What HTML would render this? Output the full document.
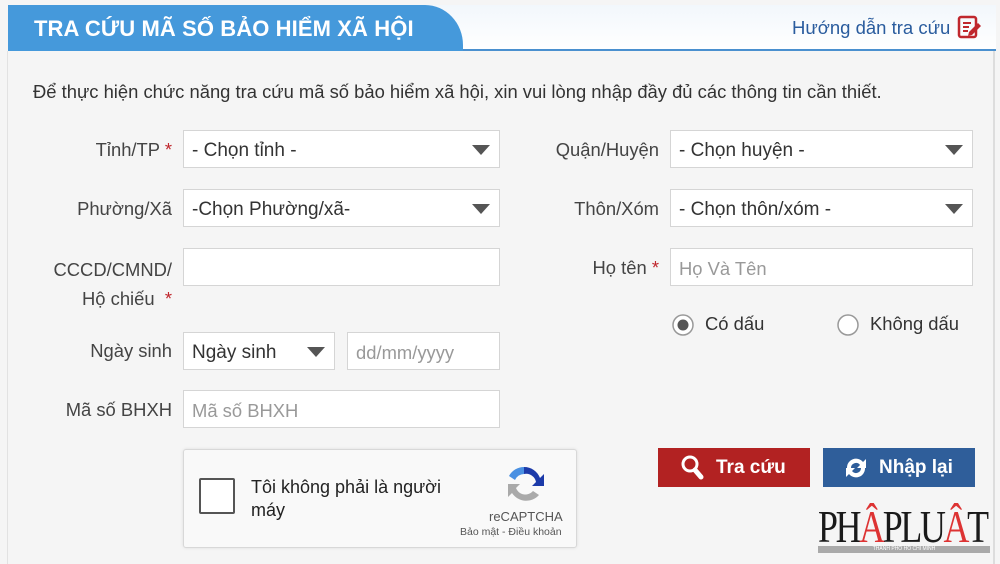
<!DOCTYPE html>
<html><head><meta charset="utf-8"><style>
*{box-sizing:border-box;margin:0;padding:0}
body{width:1000px;height:564px;background:#f5f5f5;font-family:"Liberation Sans","DejaVu Sans",sans-serif;color:#333;position:relative;overflow:hidden;font-size:18.4px}
.abs{position:absolute}
.hdr{left:8px;top:5px;width:988px;height:46px;background:linear-gradient(#f2f7fc,#fff);border-bottom:2px solid #4a90cf}
.tab{left:8px;top:5px;width:455px;height:46px;background:#4599db;border-top-right-radius:38px 40px;color:#fff;font-weight:bold;font-size:22px;padding:11px 0 0 26px;letter-spacing:0.1px}
.rb{left:993px;top:51px;width:2px;height:513px;background:#ddd}
.lb{left:7px;top:51px;width:1px;height:513px;background:#e2e2e2}
.lbl{text-align:right;color:#444}
.f{background:#fff;border:1.5px solid #d5d5d5;height:38px;padding:0 8px;line-height:40px;color:#333}
.ph{color:#999}
.arr{position:absolute;right:9px;top:14px;width:0;height:0;border-left:9px solid transparent;border-right:9px solid transparent;border-top:10px solid #555}
.req{color:#c0272d}
.btn{height:39px;color:#fff;font-weight:bold;font-size:19px;line-height:40px}
</style></head><body>
<div class="abs hdr"></div>
<div class="abs tab">TRA CỨU MÃ SỐ BẢO HIỂM XÃ HỘI</div>
<div class="abs" style="left:792px;top:17px;color:#2a5c9e;font-size:18.5px">Hướng dẫn tra cứu</div>
<svg class="abs" style="left:957px;top:15px" width="26" height="24" viewBox="0 0 26 24"><rect x="2" y="2" width="17" height="20" rx="2" fill="none" stroke="#c0272d" stroke-width="2.5"/><path d="M6 8h8M6 12h6M6 16h5" stroke="#c0272d" stroke-width="2"/><path d="M12 17l9-9 3 3-9 9-4 1z" fill="#c0272d"/></svg>
<div class="abs lb"></div><div class="abs rb"></div>
<div class="abs" style="left:33px;top:81px;color:#333">Để thực hiện chức năng tra cứu mã số bảo hiểm xã hội, xin vui lòng nhập đầy đủ các thông tin cần thiết.</div>

<div class="abs lbl" style="left:30px;width:142px;top:139px">Tỉnh/TP <span class="req">*</span></div>
<div class="abs f" style="left:183px;top:130px;width:317px;font-size:19px">- Chọn tỉnh -<span class="arr"></span></div>
<div class="abs lbl" style="left:30px;width:142px;top:198px">Phường/Xã</div>
<div class="abs f" style="left:183px;top:189px;width:317px;font-size:19px">-Chọn Phường/xã-<span class="arr"></span></div>
<div class="abs lbl" style="left:30px;width:142px;top:255px;line-height:29px">CCCD/CMND/<br>Hộ chiếu &nbsp;<span class="req">*</span></div>
<div class="abs f" style="left:183px;top:248px;width:317px"></div>
<div class="abs lbl" style="left:30px;width:142px;top:340px">Ngày sinh</div>
<div class="abs f" style="left:183px;top:332px;width:152px;font-size:19px">Ngày sinh<span class="arr"></span></div>
<div class="abs f ph" style="left:347px;top:332px;width:153px">dd/mm/yyyy</div>
<div class="abs lbl" style="left:30px;width:142px;top:399px">Mã số BHXH</div>
<div class="abs f ph" style="left:183px;top:390px;width:317px">Mã số BHXH</div>

<div class="abs lbl" style="left:510px;width:149px;top:139px">Quận/Huyện</div>
<div class="abs f" style="left:670px;top:130px;width:303px;font-size:19px">- Chọn huyện -<span class="arr"></span></div>
<div class="abs lbl" style="left:510px;width:149px;top:198px">Thôn/Xóm</div>
<div class="abs f" style="left:670px;top:189px;width:303px;font-size:19px">- Chọn thôn/xóm -<span class="arr"></span></div>
<div class="abs lbl" style="left:510px;width:149px;top:257px">Họ tên <span class="req">*</span></div>
<div class="abs f ph" style="left:670px;top:248px;width:303px">Họ Và Tên</div>
<svg class="abs" style="left:671px;top:313px" width="24" height="24"><circle cx="12" cy="12" r="10" fill="#fff" stroke="#999" stroke-width="1.5"/><circle cx="12" cy="12" r="5.5" fill="#555"/></svg>
<div class="abs" style="left:705px;top:313px">Có dấu</div>
<svg class="abs" style="left:836px;top:313px" width="24" height="24"><circle cx="12" cy="12" r="10" fill="#fff" stroke="#999" stroke-width="1.5"/></svg>
<div class="abs" style="left:870px;top:313px">Không dấu</div>

<div class="abs" style="left:183px;top:449px;width:394px;height:99px;background:#f9f9f9;border:1px solid #d8d8d8;border-radius:3px;box-shadow:0 0 3px rgba(0,0,0,.1)"></div>
<div class="abs" style="left:199px;top:478px;width:36px;height:36px;border:2px solid #555;border-radius:2px;background:#fff"></div>
<div class="abs" style="left:251px;top:476px;font-size:18px;line-height:23px;color:#222">Tôi không phải là người<br>máy</div>
<svg class="abs" style="left:503px;top:463px" width="42" height="42" viewBox="0 0 42 42"><path d="M21 4a17 17 0 0 0-15 9l6 4a10 10 0 0 1 9-6z" fill="#4a90e2"/><path d="M21 4a17 17 0 0 1 16 11l4-4v12H29l4-4a10 10 0 0 0-12-8z" fill="#1c3aa9"/><path d="M5 21h12l-4 4a10 10 0 0 0 17 3l6 4A17 17 0 0 1 9 30l-4 4z" fill="#aaa"/></svg>
<div class="abs" style="left:489px;top:509px;font-size:13px;color:#555">reCAPTCHA</div>
<div class="abs" style="left:460px;top:526px;font-size:10.5px;color:#555">Bảo mật - Điều khoản</div>

<div class="abs btn" style="left:658px;top:448px;width:152px;background:#b22222;padding-left:58px">Tra cứu</div>
<svg class="abs" style="left:681px;top:455px" width="24" height="26" viewBox="0 0 24 26"><circle cx="9" cy="9" r="7" fill="none" stroke="#fff" stroke-width="3"/><path d="M14 15l6 7" stroke="#fff" stroke-width="5" stroke-linecap="round"/></svg>
<div class="abs btn" style="left:823px;top:448px;width:152px;background:#2f5e9a;padding-left:56px">Nhập lại</div>
<svg class="abs" style="left:843px;top:455px" width="26" height="26" viewBox="0 0 26 26"><path d="M4 13A9 9 0 0 1 20 7l3-3v9h-9l3-3a5 5 0 0 0-9 3z" fill="#fff"/><path d="M22 13A9 9 0 0 1 6 19l-3 3v-9h9l-3 3a5 5 0 0 0 9-3z" fill="#fff"/></svg>

<div class="abs" style="left:818px;top:505px;font-family:'Liberation Serif',serif;font-size:46px;line-height:44px;color:#1a1a1a;letter-spacing:-3px;transform:scaleX(0.78);transform-origin:left;white-space:nowrap">PH<span style="color:#d33">Â</span>PLU<span style="color:#d33">Â</span>T</div>
<div class="abs" style="left:818px;top:546px;width:172px;height:7px;background:#aaa;font-size:5px;color:#fff;text-align:center;line-height:7px">THÀNH PHỐ HỒ CHÍ MINH</div>
</body></html>
